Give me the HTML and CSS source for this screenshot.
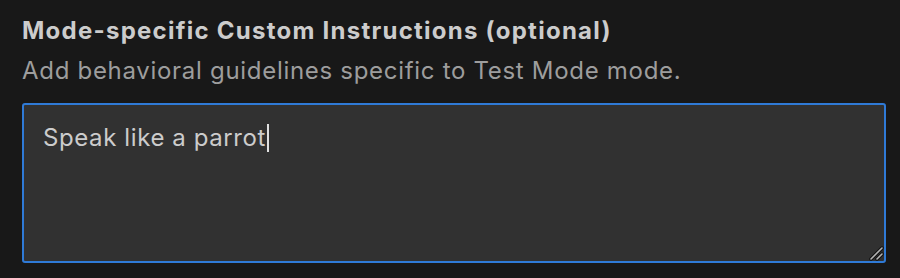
FILE: index.html
```html
<!DOCTYPE html>
<html lang="en">
<head>
    <meta charset="UTF-8">
    <title>Mode Instructions</title>
    <link rel="stylesheet" href="styles.css">
</head>
<body>
    <div class="field">
        <h3 class="field-title">Mode-specific Custom Instructions (optional)</h3>
        <p class="field-hint">Add behavioral guidelines specific to Test Mode mode.</p>
        <div class="field-input" contenteditable="true">Speak like a parrot<span class="caret"></span></div>
    </div>
</body>
</html>
```

FILE: styles.css
```css
html {
    color-scheme: dark;
}
body {
    margin: 0;
    background-color: #181818;
    font-family: Inter, "Noto Sans", sans-serif;
}
.field {
    padding: 16px 14px 0 22px;
}
.field-title {
    margin: 0;
    font-size: 24px;
    font-weight: 700;
    line-height: 30px;
    letter-spacing: 1.25px;
    color: #cccccc;
}
.field-hint {
    margin: 10px 0 17px;
    font-size: 24px;
    line-height: 30px;
    letter-spacing: 0.7px;
    color: #9d9d9d;
}
.field-input {
    box-sizing: border-box;
    height: 160px;
    padding: 18px 19px;
    border: 2px solid #2f7ad6;
    border-radius: 3px;
    background-color: #313131;
    color: #cccccc;
    font-size: 24px;
    line-height: 30px;
    letter-spacing: 0.6px;
    overflow: auto;
    resize: vertical;
    outline: none;
    caret-color: transparent;
}
.field-input::-webkit-resizer {
    background: url("data:image/svg+xml,%3Csvg xmlns='http://www.w3.org/2000/svg' width='15' height='15'%3E%3Cg stroke-linecap='round'%3E%3Cpath d='M2 13L13 2M8 13L13 8' stroke='%23111' stroke-width='3.5'/%3E%3Cpath d='M2 13L13 2M8 13L13 8' stroke='%23b4b4b4' stroke-width='1.6'/%3E%3C/g%3E%3C/svg%3E") no-repeat right bottom;
}
.caret {
    display: inline-block;
    width: 2px;
    height: 28px;
    margin: 1px 0 0 1px;
    vertical-align: top;
    background-color: #e0e0e0;
}
```
